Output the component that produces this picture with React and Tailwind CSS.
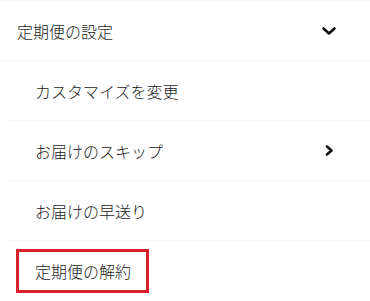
const ChevronDown = () => (
  <svg width="14" height="8" viewBox="0 0 14 8" fill="none">
    <path d="M1.5 1.5 L7 6.5 L12.5 1.5" stroke="#111" strokeWidth="2.6" strokeLinecap="round" strokeLinejoin="round" />
  </svg>
);

const ChevronRight = () => (
  <svg width="9" height="11" viewBox="0 0 9 11" fill="none">
    <path d="M2 1.5 L6.5 5.5 L2 9.5" stroke="#111" strokeWidth="2.6" strokeLinecap="round" strokeLinejoin="round" />
  </svg>
);

const items = [
  { label: 'カスタマイズを変更' },
  { label: 'お届けのスキップ', arrow: true },
  { label: 'お届けの早送り' },
  { label: '定期便の解約', marked: true },
];

export default function App() {
  return (
    <div
      className="w-[370px] h-[301px] overflow-hidden bg-white text-[16px] font-light text-[#1a1a1a]"
      style={{ fontFamily: '"Noto Sans CJK JP", "Noto Sans", sans-serif' }}
    >
      {/* Accordion header */}
      <div className="flex items-center justify-between h-[61px] pl-[17px] pr-[34px] border-t border-b border-[#f2f2f2]">
        <span>定期便の設定</span>
        <ChevronDown />
      </div>

      {/* Sub menu */}
      <ul className="ml-2">
        {items.map((item) => (
          <li
            key={item.label}
            className="relative flex items-center justify-between h-[60px] pl-[27px] pr-[36px] border-b border-[#f2f2f2] last:border-0"
          >
            <span>{item.label}</span>
            {item.arrow && <ChevronRight />}
            {item.marked && (
              <div className="absolute left-2 top-2 w-[133px] h-[44px] border-[3px] border-[#d7202c]" />
            )}
          </li>
        ))}
      </ul>
    </div>
  );
}
